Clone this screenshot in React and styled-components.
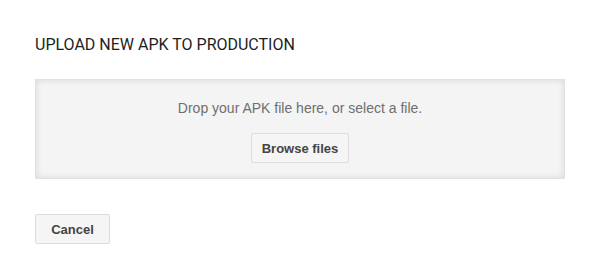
import React from 'react'
import styled, { createGlobalStyle } from 'styled-components'

const GlobalStyle = createGlobalStyle`
  html, body {
    margin: 0;
    padding: 0;
    background: #fff;
  }
`

const Page = styled.div`
  width: 600px;
  height: 270px;
  box-sizing: border-box;
  padding: 35px 35px 0 35px;
  display: flex;
  flex-direction: column;
`

const Title = styled.h2`
  margin: 0;
  font-family: Roboto, "Liberation Sans", sans-serif;
  font-weight: 400;
  font-size: 16px;
  line-height: 20px;
  color: #1e1e1e;
`

const DropZone = styled.div`
  margin-top: 24px;
  width: 530px;
  height: 100px;
  box-sizing: border-box;
  background: #f4f4f4;
  border: 1px solid #e2e2e2;
  box-shadow: inset 0 0 6px rgba(0, 0, 0, 0.12);
  display: flex;
  flex-direction: column;
  align-items: center;
  padding-top: 19px;
  gap: 16px;
`

const Hint = styled.p`
  margin: 0;
  font-family: "Liberation Sans", Arial, sans-serif;
  font-size: 14px;
  line-height: 18px;
  color: #6f6f6f;
`

const Button = styled.button`
  height: 30px;
  width: ${({ $w }) => $w}px;
  box-sizing: border-box;
  padding: 0;
  background: #f5f5f5;
  border: 1px solid #dcdcdc;
  border-radius: 2px;
  font-family: "Liberation Sans", Arial, sans-serif;
  font-weight: 700;
  font-size: 13px;
  color: #444;
  cursor: pointer;
`

const Actions = styled.div`
  margin-top: 35px;
  display: flex;
`

export default function App() {
  return (
    <>
      <GlobalStyle />
      <Page>
        <Title>UPLOAD NEW APK TO PRODUCTION</Title>
        <DropZone>
          <Hint>Drop your APK file here, or select a file.</Hint>
          <Button $w={98}>Browse files</Button>
        </DropZone>
        <Actions>
          <Button $w={75}>Cancel</Button>
        </Actions>
      </Page>
    </>
  )
}
